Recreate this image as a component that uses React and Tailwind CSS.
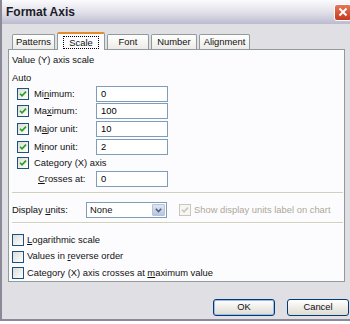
// Format Axis dialog (Excel, XP silver theme), Scale tab
const font = { fontFamily: '"Liberation Sans", Arial, sans-serif' };

function Check({ checked, disabled }) {
  return (
    <span
      className={`flex h-[12px] w-[12px] shrink-0 items-center justify-center border ${
        disabled ? 'border-[#c9c7ba] bg-[#f6f6f3]' : 'border-[#1c5180] bg-gradient-to-br from-[#dcdcd7] to-white'
      }`}
    >
      {checked && (
        <svg width="8" height="8" viewBox="0 0 8 8">
          <path
            d="M1 3.8 L3 5.8 L7 1.6"
            fill="none"
            stroke={disabled ? '#c9c7ba' : '#21a121'}
            strokeWidth="1.6"
          />
        </svg>
      )}
    </span>
  );
}

function Field({ value }) {
  return (
    <div className="flex h-[16px] w-[72px] items-center border border-[#7f9db9] bg-white pl-[4px] text-black">
      {value}
    </div>
  );
}

function U({ children }) {
  return <span className="underline underline-offset-1">{children}</span>;
}

const tabs = ['Patterns', 'Scale', 'Font', 'Number', 'Alignment'];
const tabWidths = ['w-[43px]', 'w-[48px]', 'w-[42px]', 'w-[46px]', 'w-[51px]'];

const autoRows = [
  { label: <>Mi<U>n</U>imum:</>, value: '0' },
  { label: <>Ma<U>x</U>imum:</>, value: '100' },
  { label: <>M<U>a</U>jor unit:</>, value: '10' },
  { label: <>M<U>i</U>nor unit:</>, value: '2' },
];

export default function App() {
  return (
    <div className="h-[324px] w-[350px] overflow-hidden bg-white text-[9.4px] text-[#111]" style={font}>
      <div className="flex h-[321px] flex-col border-b-2 border-l-2 border-[#8a8998] bg-[#e0dfe3]">
        {/* title bar */}
        <div className="flex h-[24px] shrink-0 items-center justify-between bg-gradient-to-b from-[#fbfbfd] via-[#e2e1ea] to-[#bcbbcf] pl-[4px]">
          <span className="text-[12px] font-bold text-[#1b1b28]">Format Axis</span>
          <span className="mr-[-2px] flex h-[17px] w-[18px] items-center justify-center rounded-[3px] border border-white bg-gradient-to-b from-[#e5765a] to-[#c4381b]">
            <svg width="10" height="10" viewBox="0 0 10 10">
              <path d="M1.5 1.5 L8.5 8.5 M8.5 1.5 L1.5 8.5" stroke="white" strokeWidth="2" />
            </svg>
          </span>
        </div>

        {/* tabs */}
        <div className="ml-[10px] mt-[8px] flex h-[17px] items-end">
          {tabs.map((t, i) => {
            const sel = t === 'Scale';
            return (
              <div
                key={t}
                className={`${tabWidths[i]} mr-[2px] flex items-center justify-center border-x border-t border-[#919b9c] ${
                  sel
                    ? 'relative z-10 -mb-px h-[18px] border-t-2 border-t-[#e68b2c] bg-[#fcfcfe]'
                    : 'h-[15px] bg-gradient-to-b from-white to-[#ecebe6]'
                } rounded-t-[2px]`}
              >
                {sel ? (
                  <span className="border border-dotted border-black px-[5px] leading-[11px]">{t}</span>
                ) : (
                  t
                )}
              </div>
            );
          })}
        </div>

        {/* panel */}
        <div className="ml-[6px] flex h-[233px] w-[337px] flex-col border border-[#919b9c] bg-[#fcfcfe] px-[3px]">
          <div className="mt-[3px] flex h-[14px] items-center">Value (Y) axis scale</div>
          <div className="mt-[4px] flex h-[14px] items-center">Auto</div>

          {autoRows.map((r, i) => (
            <div key={i} className="flex h-[18px] items-center">
              <div className="ml-[5px] flex w-[79px] items-center gap-[5px]">
                <Check checked />
                <span>{r.label}</span>
              </div>
              <Field value={r.value} />
            </div>
          ))}

          <div className="flex h-[16px] items-center">
            <div className="ml-[5px] flex items-center gap-[5px]">
              <Check checked />
              <span>Category (X) axis</span>
            </div>
          </div>
          <div className="flex h-[16px] items-center">
            <span className="ml-[26px] w-[58px]">
              <U>C</U>rosses at:
            </span>
            <Field value="0" />
          </div>

          <div className="mt-[5px] h-[2px] w-[331px] border-t border-b border-t-[#d0d0bf] border-b-white bg-[#d0d0bf]" />

          <div className="mt-[8px] flex h-[16px] items-center">
            <span className="w-[74px]">
              Display <U>u</U>nits:
            </span>
            <div className="flex h-[16px] w-[81px] items-center justify-between border border-[#7f9db9] bg-white pl-[3px]">
              <span>None</span>
              <span className="mr-[1px] flex h-[12px] w-[13px] items-center justify-center rounded-[1px] border border-[#b6c3d6] bg-gradient-to-b from-[#dfe6f3] to-[#b7c5dd]">
                <svg width="7" height="5" viewBox="0 0 7 5">
                  <path d="M0.8 0.8 L3.5 3.6 L6.2 0.8" fill="none" stroke="#4d6185" strokeWidth="1.6" />
                </svg>
              </span>
            </div>
            <div className="ml-[12px] flex items-center gap-[3px] text-[#aca899]">
              <Check checked disabled />
              <span>Show display units label on chart</span>
            </div>
          </div>

          <div className="mt-[4px] h-[2px] w-[331px] border-t border-b border-t-[#d0d0bf] border-b-white bg-[#d0d0bf]" />

          <div className="mt-[8px] flex h-[16px] items-center gap-[3px]">
            <Check />
            <span>
              <U>L</U>ogarithmic scale
            </span>
          </div>
          <div className="mt-[1px] flex h-[16px] items-center gap-[3px]">
            <Check />
            <span>
              Values in <U>r</U>everse order
            </span>
          </div>
          <div className="mt-[1px] flex h-[16px] items-center gap-[3px]">
            <Check />
            <span>
              Category (X) axis crosses at <U>m</U>aximum value
            </span>
          </div>
        </div>

        {/* buttons */}
        <div className="mt-[17px] flex justify-end gap-[12px] pr-[1px]">
          <button className="flex h-[17px] w-[62px] items-center justify-center rounded-[3px] border border-[#003c74] bg-gradient-to-b from-white to-[#dedbd3] shadow-[inset_0_0_0_1px_#9eb9ea]">
            OK
          </button>
          <button className="flex h-[17px] w-[62px] items-center justify-center rounded-[3px] border border-[#003c74] bg-gradient-to-b from-white to-[#dedbd3]">
            Cancel
          </button>
        </div>
      </div>
    </div>
  );
}
